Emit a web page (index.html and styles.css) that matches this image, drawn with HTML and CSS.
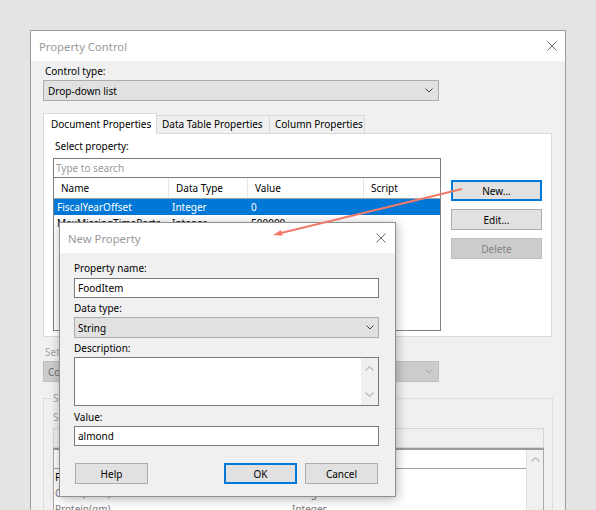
FILE: index.html
```html
<!DOCTYPE html>
<html lang="en">
<head>
    <meta charset="UTF-8">
    <title>Property Control</title>
    <link rel="stylesheet" href="styles.css">
</head>
<body>
    <!-- main dialog -->
    <div class="window main-window">
        <div class="titlebar">
            <span>Property Control</span>
            <svg class="close-icon" width="10" height="10" viewBox="0 0 10 10"><path d="M0.5 0.5 L9.5 9.5 M9.5 0.5 L0.5 9.5"/></svg>
        </div>
        <div class="main-body">
            <div class="field-label">Control type:</div>
            <div class="select">
                <span>Drop-down list</span>
                <svg class="chevron" width="8" height="5" viewBox="0 0 8 5"><path d="M0.5 0.5 L4 4 L7.5 0.5"/></svg>
            </div>

            <div class="tabs">
                <div class="tab active tab-doc">Document Properties</div>
                <div class="tab tab-table">Data Table Properties</div>
                <div class="tab tab-column">Column Properties</div>
            </div>
            <div class="tab-panel">
                <div class="prop-col">
                    <div class="field-label">Select property:</div>
                    <div class="search">Type to search</div>
                    <div class="prop-list">
                        <div class="list-row list-head">
                            <span>Name</span><span>Data Type</span><span>Value</span><span>Script</span>
                        </div>
                        <div class="list-row selected">
                            <span>FiscalYearOffset</span><span>Integer</span><span>0</span><span></span>
                        </div>
                        <div class="list-row">
                            <span>MaxMissingTimeParts</span><span>Integer</span><span>500000</span><span></span>
                        </div>
                    </div>
                </div>
                <div class="side-buttons">
                    <button class="btn btn-default">New...</button>
                    <button class="btn">Edit...</button>
                    <button class="btn" disabled>Delete</button>
                </div>
            </div>

            <div class="field-label muted after-panel">Set property value through:</div>
            <div class="select disabled">
                <span>Column selection</span>
                <svg class="chevron" width="8" height="5" viewBox="0 0 8 5"><path d="M0.5 0.5 L4 4 L7.5 0.5"/></svg>
            </div>

            <fieldset class="group">
                <legend>Settings</legend>
                <div class="field-label muted group-label">Search:</div>
                <div class="filter-box"></div>
                <div class="column-list">
                    <div class="column-rows">
                        <div class="column-head"></div>
                        <div class="column-row first"><span>Fat(gm)</span><span>Integer</span></div>
                        <div class="column-row"><span>Carbs(Total)</span><span>Integer</span></div>
                        <div class="column-row"><span>Protein(gm)</span><span>Integer</span></div>
                    </div>
                    <div class="vscroll">
                        <svg class="scroll-arrow" width="9" height="5" viewBox="0 0 9 5"><path d="M0.5 4.5 L4.5 0.7 L8.5 4.5"/></svg>
                    </div>
                </div>
            </fieldset>
        </div>
    </div>

    <!-- New Property dialog -->
    <div class="window dialog">
        <div class="titlebar">
            <span>New Property</span>
            <svg class="close-icon" width="10" height="10" viewBox="0 0 10 10"><path d="M0.5 0.5 L9.5 9.5 M9.5 0.5 L0.5 9.5"/></svg>
        </div>
        <div class="dialog-body">
            <div class="field-label first-label">Property name:</div>
            <div class="text-input">FoodItem</div>
            <div class="field-label">Data type:</div>
            <div class="select">
                <span>String</span>
                <svg class="chevron" width="8" height="5" viewBox="0 0 8 5"><path d="M0.5 0.5 L4 4 L7.5 0.5"/></svg>
            </div>
            <div class="field-label">Description:</div>
            <div class="textarea-box">
                <div class="vscroll">
                    <svg class="scroll-arrow" width="9" height="5" viewBox="0 0 9 5"><path d="M0.5 4.5 L4.5 0.7 L8.5 4.5"/></svg>
                    <svg class="scroll-arrow" width="9" height="5" viewBox="0 0 9 5"><path d="M0.5 0.5 L4.5 4.3 L8.5 0.5"/></svg>
                </div>
            </div>
            <div class="field-label value-label">Value:</div>
            <div class="text-input">almond</div>
            <div class="dialog-buttons">
                <button class="btn btn-small">Help</button>
                <div class="button-group">
                    <button class="btn btn-small btn-default">OK</button>
                    <button class="btn btn-small">Cancel</button>
                </div>
            </div>
        </div>
    </div>

    <!-- red annotation arrow -->
    <svg class="annotation" width="596" height="510" viewBox="0 0 596 510">
        <line x1="462" y1="189" x2="280" y2="233.3"/>
        <polygon points="273,235 282.5,235.8 281,229.9"/>
    </svg>
</body>
</html>
```

FILE: styles.css
```css
/* base */
* {
    box-sizing: border-box;
}
body {
    margin: 0;
    height: 510px;
    overflow: hidden;
    background: #e4e4e4;
    font-family: "Noto Sans", "Open Sans", sans-serif;
    font-size: 10px;
    color: #000;
}

/* windows */
.window {
    background: #f0f0f0;
    border: 1px solid #9c9c9c;
}
.main-window {
    width: 536px;
    height: 500px;
    margin: 30px 0 0 30px;
    overflow: hidden;
}
.titlebar {
    height: 30px;
    display: flex;
    align-items: center;
    justify-content: space-between;
    padding: 0 8px 0 8px;
    background: #fff;
    color: #9a9a9a;
    font-size: 11.3px;
}
.close-icon path {
    stroke: #6a6a6a;
    stroke-width: 1;
    fill: none;
}
.main-body {
    padding-left: 12px;
}

/* labels and inputs */
.field-label {
    height: 16px;
    line-height: 16px;
    margin-top: 2px;
    padding-left: 2px;
    white-space: nowrap;
}
.field-label.muted {
    color: #a0a0a0;
}
.select {
    width: 396px;
    height: 21px;
    margin-top: 1px;
    display: flex;
    align-items: center;
    justify-content: space-between;
    padding: 0 5px 0 4px;
    background: #e1e1e1;
    border: 1px solid #adadad;
    white-space: nowrap;
}
.chevron path {
    stroke: #444;
    stroke-width: 1;
    fill: none;
}
.select.disabled {
    background: #cccccc;
    border-color: #bfbfbf;
    color: #6d6d6d;
}
.select.disabled .chevron path {
    stroke: #a0a0a0;
}

/* tabs */
.tabs {
    display: flex;
    align-items: flex-end;
    height: 20px;
    margin-top: 12px;
    position: relative;
    z-index: 1;
}
.tab {
    height: 18px;
    line-height: 17px;
    padding-left: 5px;
    background: #f0f0f0;
    border: 1px solid #d9d9d9;
    border-bottom: none;
    white-space: nowrap;
}
.tab + .tab {
    border-left: none;
}
.tab.active {
    height: 21px;
    line-height: 20px;
    margin-bottom: -1px;
    padding-left: 7px;
    background: #fff;
}
.tab-doc { width: 114px; }
.tab-table { width: 113px; }
.tab-column { width: 95px; }

.tab-panel {
    width: 509px;
    height: 204px;
    display: flex;
    padding: 4px 0 0 9px;
    background: #fff;
    border: 1px solid #d9d9d9;
}
.prop-col {
    width: 388px;
}
.prop-col .field-label {
    margin-top: 0;
}
.search {
    height: 20px;
    margin-top: 4px;
    padding-left: 2px;
    line-height: 18px;
    border: 1px solid #7a7a7a;
    color: #9a9a9a;
}

/* property list */
.prop-list {
    height: 153px;
    border: 1px solid #828282;
    border-top: none;
}
.list-row {
    display: grid;
    grid-template-columns: 114px 79px 116px 1fr;
    height: 16px;
    line-height: 16px;
    white-space: nowrap;
}
.list-row span {
    padding-left: 4px;
    overflow: hidden;
}
.list-row span:first-child {
    padding-left: 3px;
}
.list-head {
    height: 21px;
    line-height: 20px;
    border-bottom: 1px solid #a0a0a0;
}
.list-head span {
    padding-left: 7px;
    border-left: 1px solid #e5e5e5;
}
.list-head span:first-child {
    padding-left: 7px;
    border-left: none;
}
.list-row.selected {
    background: #0078d7;
    color: #fff;
}

/* buttons */
.side-buttons {
    display: flex;
    flex-direction: column;
    gap: 8px;
    margin-left: 10px;
    padding-top: 42px;
}
.btn {
    width: 91px;
    height: 21px;
    padding: 0;
    font: inherit;
    color: #000;
    background: #e1e1e1;
    border: 1px solid #adadad;
}
.btn-default {
    border: 2px solid #0078d7;
}
.btn:disabled {
    background: #cccccc;
    border-color: #bfbfbf;
    color: #838383;
}
.btn-small {
    width: 73px;
}

/* lower (disabled) section */
.after-panel {
    margin-top: 7px;
}
.group {
    width: 510px;
    height: 150px;
    margin: 8px 0 0 0;
    padding: 0 8px 0 9px;
    border: 1px solid #dcdcdc;
}
.group legend {
    height: 16px;
    line-height: 16px;
    padding: 0 2px;
    margin-left: -2px;
    color: #a0a0a0;
}
.group-label {
    margin-top: 3px;
    padding-left: 0;
}
.filter-box {
    height: 20px;
    margin-top: 3px;
    background: #f0f0f0;
    border: 1px solid #d4d4d4;
}
.column-list {
    height: 90px;
    display: flex;
    background: #fff;
    border: 1px solid #a9a9a9;
    border-top: 2px solid #9a9a9a;
}
.column-rows {
    flex: 1;
}
.column-head {
    height: 19px;
    border-bottom: 1px solid #a0a0a0;
}
.column-row {
    display: grid;
    grid-template-columns: 237px 1fr;
    height: 16px;
    line-height: 16px;
    padding-left: 1px;
    color: #7a7a7a;
    white-space: nowrap;
}
.column-row.first {
    color: #000;
}
.vscroll {
    width: 17px;
    display: flex;
    flex-direction: column;
    align-items: center;
    justify-content: space-between;
    padding: 7px 0;
    background: #f0f0f0;
}
.column-list .vscroll {
    border-left: 1px solid #e0e0e0;
}
.scroll-arrow path {
    stroke: #bdbdbd;
    stroke-width: 1.3;
    fill: none;
}

/* New Property dialog */
.dialog {
    position: absolute;
    left: 59px;
    top: 222px;
    width: 337px;
    height: 275px;
    border-color: #8f8f8f;
    box-shadow: 1px 2px 10px rgba(0, 0, 0, 0.3);
}
.dialog .titlebar {
    padding-right: 9px;
}
.dialog-body {
    padding: 0 16px 0 14px;
}
.dialog .field-label {
    padding-left: 0;
}
.dialog .first-label {
    margin-top: 7px;
}
.dialog .value-label {
    margin-top: 3px;
}
.dialog .select {
    width: 305px;
    padding: 0 4px 0 3px;
}
.text-input {
    height: 20px;
    margin-top: 2px;
    padding-left: 3px;
    line-height: 18px;
    background: #fff;
    border: 1px solid #7a7a7a;
}
.value-label + .text-input {
    margin-top: 1px;
}
.textarea-box {
    height: 49px;
    margin-top: 1px;
    display: flex;
    justify-content: flex-end;
    background: #fff;
    border: 1px solid #7a7a7a;
}
.textarea-box .vscroll {
    padding: 8px 0;
}
.dialog-buttons {
    display: flex;
    justify-content: space-between;
    margin-top: 17px;
    padding: 0 1px;
}
.button-group {
    display: flex;
    gap: 8px;
}

/* annotation arrow */
.annotation {
    position: absolute;
    left: 0;
    top: 0;
    pointer-events: none;
}
.annotation line {
    stroke: #f27a68;
    stroke-width: 2.2;
}
.annotation polygon {
    fill: #f27a68;
}
```
